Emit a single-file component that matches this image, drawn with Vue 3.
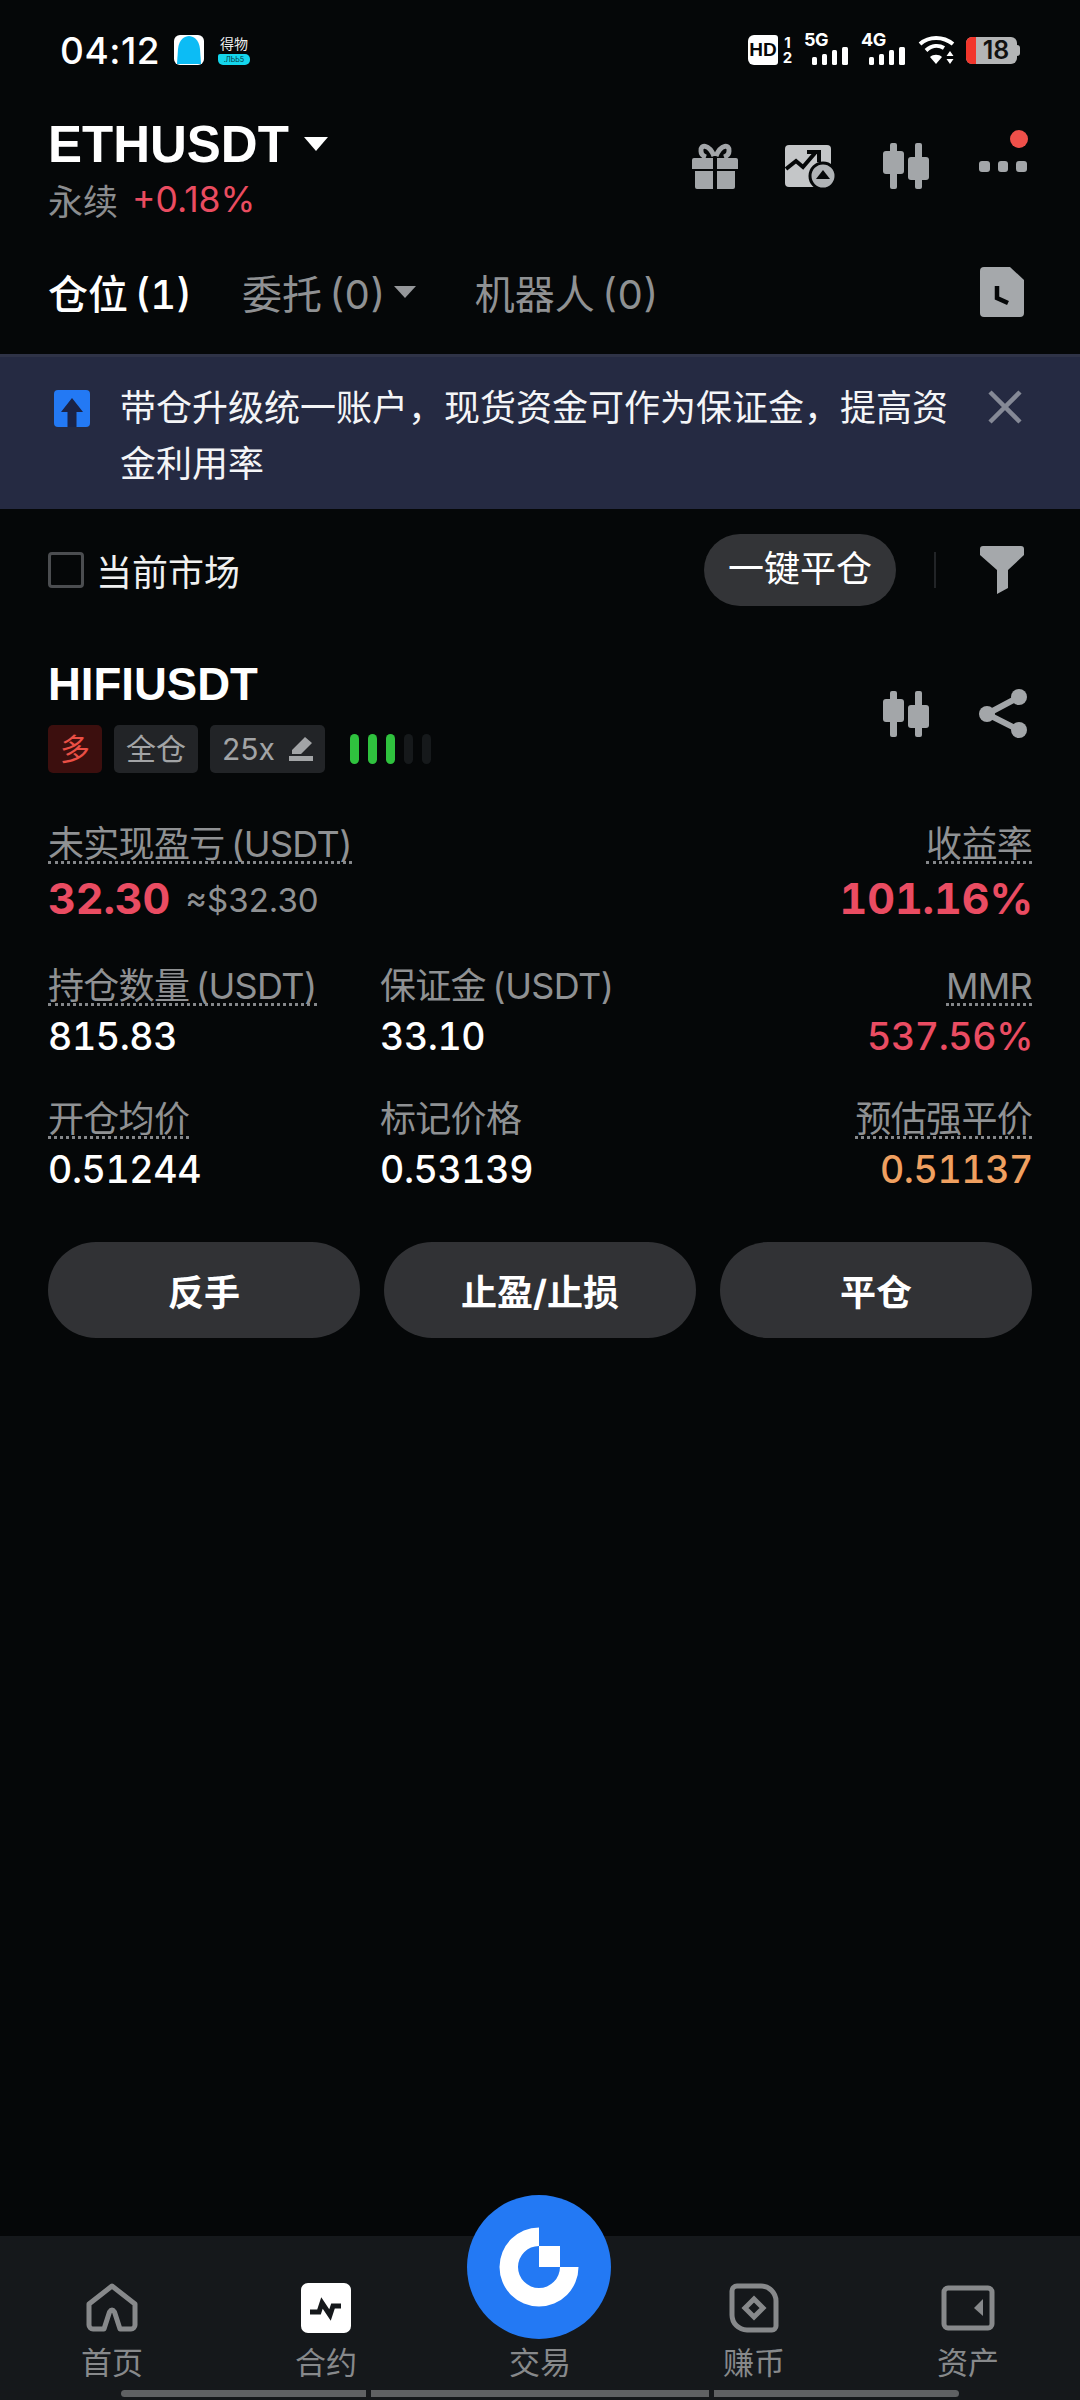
<script setup>
const rows = [
  [
    { label: '未实现盈亏 (USDT)', big: '32.30', sub: '≈$32.30', cls: 'red bold', dotted: true },
    null,
    { label: '收益率', big: '101.16%', cls: 'red bold', dotted: true }
  ],
  [
    { label: '持仓数量 (USDT)', big: '815.83', dotted: true },
    { label: '保证金 (USDT)', big: '33.10' },
    { label: 'MMR', big: '537.56%', cls: 'red', dotted: true }
  ],
  [
    { label: '开仓均价', big: '0.51244', dotted: true },
    { label: '标记价格', big: '0.53139' },
    { label: '预估强平价', big: '0.51137', cls: 'orange', dotted: true }
  ]
]
const bars = [1, 1, 1, 0, 0]
const actions = ['反手', '止盈/止损', '平仓']
</script>

<template>
  <div class="page">
    <div class="status">
      <div class="status-left">
        <span class="time">04:12</span>
        <svg class="app1" width="30" height="30" viewBox="0 0 30 30">
          <rect width="30" height="30" rx="6" fill="#fff" />
          <path d="M3 29 L4 14 C5 4 11 1 15 1 C19 1 25 4 26 14 L27 29 Z" fill="#0cbcf5" />
        </svg>
        <div class="app2">
          <span class="app2-t">得物</span>
          <span class="app2-b">.ЛЬЬ5</span>
        </div>
      </div>
      <div class="status-right">
        <span class="hd">HD</span>
        <span class="sim"><b>1</b><b>2</b></span>
        <div class="net">
          <span class="net-t">5G</span>
          <svg width="36" height="18" viewBox="0 0 36 18" class="net-b"><rect x="0" y="10" width="5" height="8" rx="1.500" fill="#fff"/><rect x="10" y="7" width="5" height="11" rx="1.500" fill="#fff"/><rect x="20" y="3" width="5" height="15" rx="1.500" fill="#fff"/><rect x="30" y="0" width="6" height="18" rx="1.500" fill="#fff"/></svg>
        </div>
        <div class="net">
          <span class="net-t">4G</span>
          <svg width="36" height="18" viewBox="0 0 36 18" class="net-b"><rect x="0" y="10" width="5" height="8" rx="1.500" fill="#fff"/><rect x="10" y="7" width="5" height="11" rx="1.500" fill="#fff"/><rect x="20" y="3" width="5" height="15" rx="1.500" fill="#fff"/><rect x="30" y="0" width="6" height="18" rx="1.500" fill="#fff"/></svg>
        </div>
        <svg class="wifi" width="37" height="30" viewBox="0 0 37 30">
          <path d="M2 9 C11 1 25 1 35 9" fill="none" stroke="#fff" stroke-width="4"/>
          <path d="M8 15.500 C14 10 21 10 26 13" fill="none" stroke="#fff" stroke-width="4"/>
          <path d="M18 29 L12 22 C15 19 21 19 24 22 Z" fill="#fff"/>
          <path d="M32 16l3.500 5h-7zM32 29l3.500-5h-7z" fill="#fff"/>
        </svg>
        <div class="battery">
          <span class="batt-red"></span>
          <span class="batt-num">18</span>
          <span class="batt-tip"></span>
        </div>
      </div>
    </div>

    <header class="head">
      <div class="head-left">
        <div class="title"><span>ETHUSDT</span><i class="tri-big"></i></div>
        <div class="sub"><span class="perp">永续</span><span class="change">+0.18%</span></div>
      </div>
      <div class="head-icons">
        <svg width="46" height="46" viewBox="0 0 46 46">
          <path d="M22 13 C17 1 8 1 9 8 C9 11 11 13 14 14 M24 13 C29 1 38 1 37 8 C37 11 35 13 32 14" fill="none" stroke="#a3a6a9" stroke-width="5"/>
          <path d="M2 15h19v11H0V17a2 2 0 0 1 2-2zM25 15h19a2 2 0 0 1 2 2v9H25zM3 28h18v18H5a2 2 0 0 1-2-2zM25 28h18v16a2 2 0 0 1-2 2H25z" fill="#a3a6a9"/>
        </svg>
        <svg width="50" height="46" viewBox="0 0 50 46">
          <rect x="0" y="2" width="46" height="42" rx="4" fill="#c4c6c8"/>
          <path d="M1 26 L11 18 L18 24 L30 10" fill="none" stroke="#050708" stroke-width="4"/>
          <path d="M22 9h12v10" fill="none" stroke="#050708" stroke-width="4"/>
          <circle cx="38" cy="33" r="13" fill="#b0b3b6" stroke="#050708" stroke-width="3"/>
          <path d="M38 27l7 9H31z" fill="#050708"/>
        </svg>
        <svg class="candle" width="46" height="46" viewBox="0 0 46 46">
          <rect x="7" y="0" width="7" height="46" rx="2" fill="#a3a6a9"/><rect x="0" y="8" width="21" height="23" rx="3" fill="#a3a6a9"/>
          <rect x="32" y="0" width="7" height="46" rx="2" fill="#a3a6a9"/><rect x="25" y="14" width="21" height="23" rx="3" fill="#a3a6a9"/>
        </svg>
        <div class="more">
          <i></i><i></i><i></i>
          <span class="red-dot"></span>
        </div>
      </div>
    </header>

    <nav class="tabs">
      <span class="tab on">仓位 (1)</span>
      <span class="tab t2">委托 (0)<i class="tri-small"></i></span>
      <span class="tab t3">机器人 (0)</span>
      <svg class="doc" width="44" height="50" viewBox="0 0 44 50">
        <path d="M4 0H30L44 13V46a4 4 0 0 1-4 4H4a4 4 0 0 1-4-4V4a4 4 0 0 1 4-4Z" fill="#a5a8ab"/>
        <path d="M17 19V31L28 36" fill="none" stroke="#050708" stroke-width="4.500"/>
      </svg>
    </nav>

    <section class="banner">
      <svg class="up" width="36" height="37" viewBox="0 0 36 37">
        <rect width="36" height="37" rx="4" fill="#2379f4"/>
        <path d="M18 8 L29 22 H22.500 V37 H13.500 V22 H7 Z" fill="#1b2346"/>
      </svg>
      <p class="banner-text">带仓升级统一账户，现货资金可作为保证金，提高资金利用率</p>
      <svg class="close" width="34" height="34" viewBox="0 0 34 34">
        <path d="M2 2 L32 32 M32 2 L2 32" stroke="#858996" stroke-width="4.500"/>
      </svg>
    </section>

    <div class="filter">
      <span class="check"></span>
      <span class="market">当前市场</span>
      <span class="pill">一键平仓</span>
      <span class="vline"></span>
      <svg width="44" height="48" viewBox="0 0 44 48">
        <path d="M3 0H41a3 3 0 0 1 3 3V9L28 24V42L17 48V24L0 9V3a3 3 0 0 1 3-3Z" fill="#a5a8ab"/>
      </svg>
    </div>

    <section class="pos">
      <div class="pos-top">
        <div>
          <div class="sym">HIFIUSDT</div>
          <div class="tags">
            <span class="tag long">多</span>
            <span class="tag">全仓</span>
            <span class="tag lev">25x
              <svg width="24" height="24" viewBox="0 0 24 24"><path d="M16 0 L23 6 L12 17 H3 V13 Z M0 19 H24 V24 H0 Z" fill="#a2a4a6"/></svg>
            </span>
            <span class="bars"><i v-for="(b, i) in bars" :key="i" :class="{ lit: b }"></i></span>
          </div>
        </div>
        <div class="pos-icons">
          <svg width="46" height="46" viewBox="0 0 46 46">
            <rect x="7" y="0" width="7" height="46" rx="2" fill="#a3a6a9"/><rect x="0" y="8" width="21" height="23" rx="3" fill="#a3a6a9"/>
            <rect x="32" y="0" width="7" height="46" rx="2" fill="#a3a6a9"/><rect x="25" y="14" width="21" height="23" rx="3" fill="#a3a6a9"/>
          </svg>
          <svg width="48" height="49" viewBox="0 0 48 49">
            <path d="M40 8 L8 25 L40 41" fill="none" stroke="#a3a6a9" stroke-width="6"/>
            <circle cx="40" cy="8" r="8" fill="#a3a6a9"/><circle cx="8" cy="25" r="8" fill="#a3a6a9"/><circle cx="40" cy="41" r="8" fill="#a3a6a9"/>
          </svg>
        </div>
      </div>

      <div class="stats">
        <template v-for="(row, r) in rows" :key="r">
          <div v-for="(c, i) in row" :key="i" class="cell" :class="['col' + i, 'row' + r]">
            <template v-if="c">
              <span class="label" :class="{ dotted: c.dotted }">{{ c.label }}</span>
              <div class="value" :class="c.cls">{{ c.big }}<small v-if="c.sub">{{ c.sub }}</small></div>
            </template>
          </div>
        </template>
      </div>

      <div class="actions">
        <button v-for="a in actions" :key="a">{{ a }}</button>
      </div>
    </section>

    <footer class="nav">
      <div class="nav-item">
        <svg width="52" height="50" viewBox="0 0 52 50">
          <path d="M3 21 L26 3 L49 21 V42 A4 4 0 0 1 45 46 H34 L28.500 29 Q26 25 23.500 29 L18 46 H7 A4 4 0 0 1 3 42 Z" fill="none" stroke="#87898b" stroke-width="5" stroke-linejoin="round"/>
        </svg>
        <span>首页</span>
      </div>
      <div class="nav-item">
        <svg width="50" height="50" viewBox="0 0 50 50">
          <rect width="50" height="50" rx="7" fill="#fff"/>
          <path d="M9 29 H18 L21 20 L29 32 L32 23 H40" fill="none" stroke="#15181b" stroke-width="5"/>
        </svg>
        <span>合约</span>
      </div>
      <div class="nav-item">
        <span class="nav-spacer"></span>
        <span>交易</span>
      </div>
      <div class="nav-item">
        <svg width="50" height="50" viewBox="0 0 50 50">
          <path d="M8 3 H32 A15 15 0 0 1 47 18 V43 A4 4 0 0 1 43 47 H18 A15 15 0 0 1 3 32 V8 A5 5 0 0 1 8 3 Z" fill="none" stroke="#87898b" stroke-width="5"/>
          <path d="M25 16 L34 25 L25 34 L16 25 Z" fill="none" stroke="#87898b" stroke-width="5"/>
        </svg>
        <span>赚币</span>
      </div>
      <div class="nav-item">
        <svg width="54" height="50" viewBox="0 0 54 50">
          <rect x="3" y="5" width="48" height="40" rx="4" fill="none" stroke="#87898b" stroke-width="5"/>
          <path d="M42 16 L33 25 L42 33 Z" fill="#87898b"/>
        </svg>
        <span>资产</span>
      </div>

      <div class="fab">
        <svg width="144" height="144" viewBox="-72 -72 144 144">
          <path d="M0 -39.500 A39.500 39.500 0 1 0 39.500 0 H21 A21 21 0 1 1 0 -21 Z" fill="#fff"/>
          <rect x="0" y="-21" width="21" height="21" fill="#fff"/>
        </svg>
      </div>

      <div class="gesture"><i class="g1"></i><i class="g2"></i><i class="g3"></i></div>
    </footer>
  </div>
</template>

<style>
html, body { margin: 0; background: #050708; }
</style>

<style scoped>
.page {
  width: 1080px;
  height: 2400px;
  display: flex;
  flex-direction: column;
  background: #050708;
  color: #fff;
  font-family: Inter, "Noto Sans CJK SC", sans-serif;
  font-variant-numeric: tabular-nums;
  overflow: hidden;
}
i { display: block; font-style: normal; }

.status {
  height: 100px;
  flex: none;
  display: flex;
  justify-content: space-between;
  align-items: center;
  padding: 0 63px 0 60px;
  box-sizing: border-box;
}
.status-left, .status-right { display: flex; align-items: center; }
.time { font-size: 37px; font-weight: 500; letter-spacing: .5px; width: 114px; font-variant-numeric: normal; }
.app2 { margin-left: 14px; width: 32px; height: 32px; display: flex; flex-direction: column; align-items: center; }
.app2-t { font-size: 14px; line-height: 19px; height: 20px; color: #eee; }
.app2-b { width: 32px; height: 11px; line-height: 11px; font-size: 7px; text-align: center; color: #05333c; background: #14d6ec; border-radius: 2px 5px 5px 5px; }
.hd { width: 30px; height: 30px; background: #fff; color: #050708; border-radius: 6px 3px 3px 6px; font: 700 19px/30px "Liberation Sans", sans-serif; text-align: center; }
.sim { display: flex; flex-direction: column; margin-left: 3px; width: 13px; }
.sim b { font: 700 15px/15px Inter, sans-serif; text-align: center; }
.net { position: relative; width: 44px; height: 30px; margin-left: 10px; }
.net-t { position: absolute; left: 0; top: -4px; font: 700 18px/18px Inter, sans-serif; letter-spacing: -.5px; }
.net-b { position: absolute; right: 0; bottom: 0; }
.net + .net { margin-left: 13px; }
.wifi { margin-left: 13px; }
.battery { position: relative; width: 51px; height: 27px; margin-left: 11px; background: #b4b5b6; border-radius: 6px; color: #111; font: 600 25px/27px Inter, sans-serif; display: block; }
.batt-red { position: absolute; left: 0; top: 0; width: 10px; height: 27px; background: #f2362c; border-radius: 6px 0 0 6px; }
.batt-num { position: absolute; left: 11px; top: 0; width: 38px; text-align: center; }
.batt-tip { position: absolute; right: -3px; top: 8px; width: 3px; height: 11px; background: #b4b5b6; border-radius: 0 3px 3px 0; }

.head {
  flex: none;
  display: flex;
  justify-content: space-between;
  padding: 16px 53px 0 48px;
}
.title { display: flex; align-items: center; height: 56px; font: 700 51px "Liberation Sans", "Noto Sans CJK SC", sans-serif; }
.tri-big { margin-left: 15px; width: 0; height: 0; border-left: 12px solid transparent; border-right: 12px solid transparent; border-top: 14px solid #fff; }
.sub { display: flex; align-items: center; height: 44px; margin-top: 5px; font-size: 35px; }
.perp { color: #8b8d8f; font-size: 35px; }
.change { color: #ea4c60; margin-left: 14px; font-size: 35.500px; font-variant-numeric: normal; }
.head-icons { display: flex; align-items: center; height: 56px; margin-top: 22px; position: relative; }
.head-icons > svg:nth-child(2) { margin-left: 47px; }
.candle { margin-left: 48px; }
.more { position: relative; margin-left: 50px; display: flex; gap: 8px; width: 48px; }
.more i { width: 11px; height: 11px; background: #a3a6a9; border-radius: 3px; }
.red-dot { position: absolute; right: -1px; top: -31px; width: 18px; height: 18px; border-radius: 50%; background: #f0504a; }

.tabs {
  flex: none;
  display: flex;
  align-items: center;
  height: 80px;
  margin-top: 31px;
  padding: 0 56px 0 48px;
  font-size: 40px;
  word-spacing: -4px;
  color: #8f9193;
}
.tab.on { color: #fff; font-weight: 500; }
.t2 { display: flex; align-items: center; margin-left: 50px; }
.tri-small { margin-left: 8px; width: 0; height: 0; border-left: 11px solid transparent; border-right: 11px solid transparent; border-top: 12px solid #95979a; }
.t3 { margin-left: 59px; }
.doc { margin-left: auto; }

.banner {
  flex: none;
  position: relative;
  margin-top: 22px;
  box-sizing: border-box;
  height: 155px;
  background: #252a42;
  border-top: 3px solid #2f3347;
  padding: 23px 0 0 120px;
}
.up { position: absolute; left: 54px; top: 33px; }
.banner-text { margin: 0; width: 835px; font-size: 36px; line-height: 56px; color: #f4f5f7; }
.close { position: absolute; left: 988px; top: 33px; }

.filter {
  flex: none;
  display: flex;
  align-items: center;
  height: 72px;
  margin-top: 25px;
  padding: 0 56px 0 48px;
}
.check { box-sizing: border-box; width: 36px; height: 36px; border: 3px solid #4b4d50; border-radius: 4px; }
.market { margin-left: 12px; font-size: 36px; color: #f0f0f0; }
.pill { margin-left: auto; width: 192px; height: 72px; line-height: 70px; text-align: center; font-size: 36px; background: #333437; border-radius: 36px; }
.vline { width: 2px; height: 36px; margin: 0 44px 0 38px; background: #222427; }

.pos { flex: 1; padding: 54px 48px 0 48px; }
.pos-top { display: flex; justify-content: space-between; }
.sym { font: 700 45.500px/50px "Liberation Sans", "Noto Sans CJK SC", sans-serif; }
.tags { display: flex; align-items: center; margin-top: 15px; }
.tag { height: 48px; box-sizing: border-box; padding: 0 12px; margin-right: 12px; line-height: 46px; font-size: 30px; background: #222427; color: #a2a4a6; border-radius: 5px; display: flex; align-items: center; gap: 14px; font-variant-numeric: normal; }
.tag.long { background: #3c0f0e; color: #ea4f45; }
.bars { display: flex; gap: 9px; margin-left: 13px; }
.bars i { width: 9px; height: 30px; background: #16191b; border-radius: 4.500px; }
.bars i.lit { background: #2fc23e; }
.pos-icons { display: flex; gap: 50px; margin: 29px 5px 0 0; height: 49px; align-items: center; }

.stats {
  display: grid;
  grid-template-columns: 332px 1fr auto;
  row-gap: 46px;
  margin-top: 55px;
}
.col2 { text-align: right; }
.label { display: inline-block; font-size: 36px; letter-spacing: -.7px; line-height: 33px; word-spacing: -3px; color: #8f9193; border-bottom: 3px solid transparent; }
.label.dotted { border-bottom: 3px dotted #85878a; }
.value { margin-top: 11px; font-size: 37.500px; line-height: 40px; font-weight: 500; letter-spacing: -.4px; }
.value small { margin-left: 15px; font-size: 33px; font-weight: 400; color: #8f9193; font-variant-numeric: normal; letter-spacing: 0; vertical-align: 2px; }
.value.bold { margin-top: 10px; font-size: 43px; line-height: 48px; font-weight: 700; letter-spacing: -.1px; }
.col2 .value { margin-right: -1px; }
.red { color: #ea4c62; }
.orange { color: #f0a060; }

.actions { display: flex; gap: 24px; margin-top: 52px; }
.actions button {
  flex: 1;
  height: 96px;
  padding: 0;
  border: 0;
  border-radius: 48px;
  background: #313235;
  color: #fff;
  font: 700 36px Inter, "Noto Sans CJK SC", sans-serif;
}

.nav {
  flex: none;
  position: relative;
  height: 164px;
  background: #15181b;
  display: grid;
  grid-template-columns: repeat(5, 1fr);
  padding: 47px 5px 0;
  box-sizing: border-box;
}
.nav-item { display: flex; flex-direction: column; align-items: center; color: #87898b; font-size: 31px; }
.nav-item svg, .nav-spacer { height: 50px; display: block; }
.nav-item span:last-child { line-height: 40px; margin-top: 10px; }
.fab {
  position: absolute;
  left: 467px;
  top: -41px;
  width: 144px;
  height: 144px;
  border-radius: 50%;
  background: #2379f4;
}
.fab svg { display: block; }
.gesture { position: absolute; left: 121px; bottom: 3px; display: flex; gap: 5px; }
.gesture i { height: 7px; background: #5f6163; }
.g1 { width: 245px; border-radius: 4px 0 0 4px; }
.g2 { width: 338px; }
.g3 { width: 245px; border-radius: 0 4px 4px 0; }
</style>
